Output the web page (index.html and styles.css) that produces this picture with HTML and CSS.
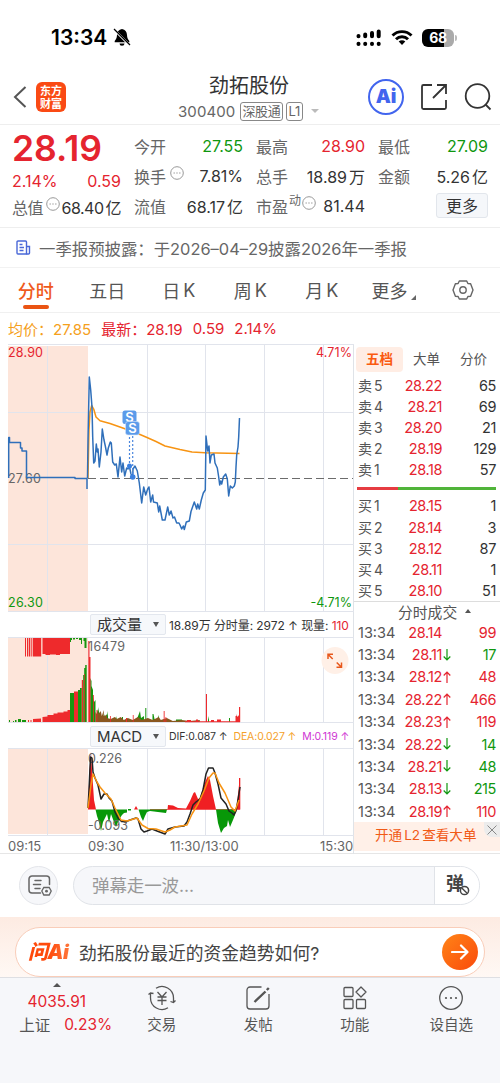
FILE: index.html
```html
<!DOCTYPE html>
<html lang="zh-CN">
<head>
<meta charset="utf-8">
<title>劲拓股份 300400</title>
<link rel="stylesheet" href="styles.css">
</head>
<body>
<div class="app">
  <div class="status">
    <span class="clock">13:34</span>
    <svg class="bell" width="18" height="19" viewBox="0 0 18 19"><path d="M9 1c-3.300 .5-4.800 3-5 6-.1 3-1 4.500-2.300 6v1.300h14.600V13C15 11.500 14.100 10 14 7c-.2-3-1.700-5.500-5-6zM6.500 15.500a2.500 2.300 0 0 0 5 0z" fill="#000"/><path d="M1 1.500l15.500 15.500" stroke="#fff" stroke-width="2.400"/><path d="M1 1l16 16" stroke="#000" stroke-width="1.300"/></svg>
    <div class="status-right">
      <svg width="26" height="18" viewBox="0 0 26 18"><g stroke="#000" stroke-width="4" stroke-linecap="round"><path d="M2.500 7v.2M9.200 5.500v1.700M16 4v3.200M22.700 2.500v4.700M2.500 14.800v.2M9.200 14.800v.2M16 14.800v.2M22.700 14.800v.2"/></g><path d="M0 11h26" stroke="#fff" stroke-width="1.800"/></svg>
      <svg width="22" height="17" viewBox="0 0 22 17"><g fill="none" stroke="#000" stroke-width="2.900"><path d="M1.500 6.500a13.500 13.500 0 0 1 19 0"/><path d="M5 10.200a8.500 8.500 0 0 1 12 0"/></g><path d="M11 16l-3.300-3.500a4.700 4.700 0 0 1 6.600 0z" fill="#000"/></svg>
      <div class="battery-wrap"><div class="battery">68</div><i class="battery-tip"></i></div>
    </div>
  </div>

  <header class="header">
    <svg class="back" width="14" height="24" viewBox="0 0 14 24"><path d="M12.500 2L2 12l10.500 10" fill="none" stroke="#555" stroke-width="2"/></svg>
    <div class="brand"><span>东方</span><span>财富</span></div>
    <div class="title">
      <div class="name">劲拓股份</div>
      <div class="code"><span>300400</span><span class="tag">深股通</span><span class="tag level">L1</span><i class="down"></i></div>
    </div>
    <div class="head-icons">
      <div class="ai-round">Ai</div>
      <svg width="28" height="28" viewBox="0 0 28 28"><g fill="none" stroke="#333" stroke-width="1.800"><path d="M12 2H3.500A1.500 1.500 0 0 0 2 3.500v21A1.500 1.500 0 0 0 3.500 26h21a1.500 1.500 0 0 0 1.500-1.500V17"/><path d="M17 2h9v9M26 2L13 15"/></g></svg>
      <svg width="28" height="28" viewBox="0 0 28 28"><g fill="none" stroke="#333" stroke-width="1.800"><circle cx="13.500" cy="13" r="11.800"/><path d="M21.500 21.500l5 5"/></g></svg>
    </div>
  </header>

  <section class="quote">
    <div class="col">
      <div class="big red">28.19</div>
      <div class="row change red"><b>2.14%</b><b>0.59</b></div>
      <div class="row cap"><span>总值<svg class="dots" viewBox="0 0 14 14"><circle cx="7" cy="7" r="6.300"/><path d="M3.500 7h1.400M6.300 7h1.400M9.100 7h1.400"/></svg></span><b>68.40<em>亿</em></b></div>
    </div>
    <div class="col">
      <div class="row"><span>今开</span><b class="green">27.55</b></div>
      <div class="row"><span>换手<svg class="dots wide" viewBox="0 0 14 14"><circle cx="7" cy="7" r="6.300"/><path d="M3.500 7h1.400M6.300 7h1.400M9.100 7h1.400"/></svg></span><b>7.81%</b></div>
      <div class="row"><span>流值</span><b>68.17<em>亿</em></b></div>
    </div>
    <div class="col">
      <div class="row"><span>最高</span><b class="red">28.90</b></div>
      <div class="row"><span>总手</span><b>18.89<em>万</em></b></div>
      <div class="row"><span>市盈<sup>动</sup><svg class="dots tight" viewBox="0 0 14 14"><circle cx="7" cy="7" r="6.300"/><path d="M3.500 7h1.400M6.300 7h1.400M9.100 7h1.400"/></svg></span><b>81.44</b></div>
    </div>
    <div class="col">
      <div class="row"><span>最低</span><b class="green">27.09</b></div>
      <div class="row"><span>金额</span><b>5.26<em>亿</em></b></div>
      <div class="row end"><span class="more-btn">更多</span></div>
    </div>
  </section>

  <div class="notice">
    <svg width="15" height="15" viewBox="0 0 15 15"><g fill="none" stroke="#4a68d8" stroke-width="1.400"><path d="M10.500 14H2a1 1 0 0 1-1-1V2a1 1 0 0 1 1-1h7.500a1 1 0 0 1 1 1z"/><path d="M10.500 6.500h3V13a1 1 0 0 1-1 1h-2M3.500 4.500h3M3.500 7.500h4.500M3.500 10.500h4"/></g></svg>
    <span>一季报预披露：于2026–04–29披露2026年一季报</span>
  </div>

  <nav class="tabs">
    <span class="tab active">分时</span><span class="tab">五日</span><span class="tab">日<i>K</i></span><span class="tab">周<i>K</i></span><span class="tab">月<i>K</i></span><span class="tab more">更多<svg width="5" height="5" viewBox="0 0 5 5"><path d="M5 0v5H0z" fill="#666"/></svg></span>
    <span class="tab"><svg class="gear" width="22" height="20" viewBox="0 0 22 20"><g fill="none" stroke="#666" stroke-width="1.400" stroke-linejoin="round"><path d="M7.300 1h7.400l1.200 2.500 2.700.3L21 10l-2.400 6.200-2.700.3-1.200 2.500H7.300l-1.200-2.500-2.700-.3L1 10l2.400-6.200 2.700-.3z"/><circle cx="11" cy="10" r="3.200"/></g></svg></span>
  </nav>

  <div class="latest"><span class="avg">均价：27.85</span><span class="new">最新：28.19</span><span>0.59</span><span>2.14%</span></div>

  <main class="main">
    <div class="charts">
      <svg class="chart" width="354" height="268" viewBox="0 344 354 268">
        <rect x="8" y="346" width="80" height="265" fill="#fde5da"/>
        <path class="grid" d="M8 344.500H354M8 412.500H354M8 544.500H354M8 611.500H354M47.500 346V611M147.500 345V611M205.500 345V611M264.500 345V611M323.500 345V611"/>
        <path d="M88 478.500H353" stroke="#6c6c6c" stroke-width="1.200" stroke-dasharray="8 4"/>
        <text x="8" y="357" class="lbl red" textLength="35">28.90</text>
        <text x="8" y="482.500" class="lbl" textLength="33">27.60</text>
        <text x="8" y="607" class="lbl green" textLength="35">26.30</text>
        <text x="316" y="357" class="lbl red" textLength="36">4.71%</text>
        <text x="310.500" y="607" class="lbl green" textLength="41.500">-4.71%</text>
        <path class="line avgline" d="M88 478L89 430L90 412L91.700 405.500L93.700 409L96 417L100 420.700L110 423.500L127 429.500L140 434.500L147 437.500L156 441.500L165 446L180 449.500L192 452L205 452.700L239.500 453.500"/>
        <path class="line" d="M8.700 478V437.500H9.500V442.500H20.500V448H22V451H26.500V477.500H75V478.500H87V489"/>
        <path class="line price" d="M87.500 478L88 440L89.300 377L90.700 390L92 407L92.700 437L93.700 463L95 461L96.300 444L97.300 452L98 449L99.300 467L101 452L102.300 429L104 440L105.300 446L107 455L108.300 448L110.300 442L111.300 443L112.700 462L114.700 465L116.300 464L118 477L120 457L121.700 472L123 463L124.700 476L126.700 468L128 469L129.300 466L131 474L132.700 477L133 469L135 466L137.300 471L139.300 483L141.700 503L143.700 487L145.700 495L147.700 489L149 487L150.700 502L152.700 495L153.500 502L157.300 503L158.700 512L159.700 506L162.300 520L165 520L167.700 507L169.300 515L171 511L173 518L174.500 517L176.700 523L179 523L180 525L181.700 529L183.300 526L184.300 529.500L186.300 522L189.300 521L191 511.500L194.300 502L196.700 509L197.700 504L199.300 509L201.300 500L203.300 493L205.300 490L206 436L207.700 451L209 446L210 463L211.300 455L214 454L215 463L217.300 468L218.700 477L219.700 485L220.700 481L221.700 484L223.300 477L225.700 474L227.300 479L228.700 496L230.300 486L232.300 488L234.300 486L235.300 482L236 467L236.700 455L238 447L238.700 437L239.500 418"/>
        <path d="M129.500 425V464M132.700 436V475" stroke="#4a86dd" stroke-width="1.200" stroke-dasharray="2 2"/>
        <circle cx="129.500" cy="466" r="2.500" fill="#3b80e0"/><circle cx="132.700" cy="477" r="2.800" fill="#3b80e0"/>
        <rect x="122.500" y="410.500" width="14" height="13.500" rx="2.500" fill="#5b9bea"/><text x="129.500" y="422" class="sell">S</text>
        <rect x="125.500" y="421.500" width="14" height="13.500" rx="2.500" fill="#5b9bea" stroke="#d5e5fb" stroke-width=".6"/><text x="132.500" y="433" class="sell">S</text>
      </svg>

      <div class="toolbar">
        <span class="select">成交量<i></i></span>
        <span class="stats vol">18.89万 分时量: 2972 ↑ 现量: <b class="red">110</b></span>
      </div>
      <svg class="chart" width="354" height="87" viewBox="0 637 354 87">
        <rect x="8" y="638" width="80" height="84.500" fill="#fde5da"/>
        <path class="grid" d="M8 637.500H354M8 722.500H354M47.500 638V722M147.500 638V722M205.500 638V722M264.500 638V722M323.500 638V722"/>
        <g fill="#ee2a2c">
          <path d="M25 638h1v18.500h-1zM27 638h1.300v18.500H27zM29 638h1.300v18.500H29zM31.300 638h1v18.500h-1zM33 638h8.200v18.500H33zM42.500 638H70v16h-10v1h-4v-.5h-6v.5h-4.500v-1h-3z"/>
          <path d="M33 722v-3l8-.5v3.500zM42.500 722v-5l5-.5v-1.500h6v-1.500h4v-1h6v-1h4v-1.500H70v12zM28 722v-2h1v2zM30.500 722v-2h1v2z"/>
          <path d="M74 722v-30.500h4V722z"/>
        </g>
        <g fill="#16960f">
          <path d="M70 722v-29h4v29zM78 722v-32h2v-2h1.800v34zM83.200 722v-47h1v-7h1v-3h1.500v57zM70 638h2v2h-1v2h-1zM73 638h2v1.500h-2zM76 638h2v1h-2zM79 638h3v6h-1v-4h-2zM83.500 638h3v10h-2v-7h-1z"/>
          <path d="M9 722v-2h1v2zM13 722v-1h1v1zM15 722v-2h1.500v2zM18 722v-3h3v3zM22 722v-2h4v2z"/>
          <path d="M90.200 722v-44l1.300 3v5l1.500 4v7l1 5 1.500-2v22zM97 722v-13l1 4v-6l1 5 2 3v7zM104 722v-8l1 3 2-3v-3l1 5v6zM115 722v-5l1 2v-3l1 4 3-2v4zM136.500 722v-2l2-5 1.500-4 1 7 3-2v6zM145.300 722v-14h1v14zM152.500 722v-8h1l1 5h3l1-4 1 7zM122 722v-5h1v5zM208 722v-6l1 4v2zM229 722v-4h1v4zM176 722v-2.500h6v2.500z"/>
        </g>
        <path d="M95.300 722v-10l1.500 2 1-4 1 4 2-3 1 5 2-6v6l3-1v3l4 1 4-2 2 2 4-2 3 3 4-2 5 2 5-3 4 3 6-2 5 2 6-3 2 3 6-2 6 3 9-1 8 1 10-1V722z" fill="#8a571e"/>
        <g fill="#ee2a2c">
          <path d="M81.800 722v-42h1.400v42zM84.300 722v-48h.7v48zM88.300 722V641h1.200v16h1v65zM93 722v-27h.8v27zM96.500 722v-12h.8v12zM110 722v-6h.8v6zM126 722v-4h1v4zM132.800 722v-7h.8v7zM163.700 722v-11h.9v11zM165.500 722v-5h.8v5zM187 722v-2h4v2zM196 722v-2.500h2v2.500zM205.900 722v-28h1.100v28zM211 722v-2h3v2zM217 722v-2.500h4v2.500zM239 722v-15h1.200v15zM235.500 722v-6h1v-2l1 3 1.500-2v7z"/>
          <path d="M185 721.300h55v.9h-55z"/>
        </g>
        <text x="88" y="651" class="lbl" textLength="37">16479</text>
        <circle cx="335" cy="660.500" r="13.500" fill="#fff0e7"/>
        <path d="M328 659v-4.800h5M328.200 654.500l4.500 4.500M341.500 662.500v4.800h-5M341.200 667l-4.500-4.500" fill="none" stroke="#e8581c" stroke-width="1.500"/>
      </svg>

      <div class="toolbar">
        <span class="select macd">MACD<i></i></span>
        <span class="stats mac"><span>DIF:0.087 ↑</span><span class="dea">DEA:0.027 ↑</span><span class="m">M:0.119 ↑</span></span>
      </div>
      <svg class="chart" width="354" height="88" viewBox="0 748 354 88">
        <rect x="8" y="749" width="80" height="85" fill="#fde5da"/>
        <path class="grid" d="M8 748.500H354M8 835.500H354M47.500 749V835M147.500 749V835M205.500 749V835M264.500 749V835M323.500 749V835"/>
        <path fill="#f01f23" d="M88 809.500L89.500 770L91 752L92 770L94 800L96 809.500zM134 809.500L136 806L138 809.500zM167.500 809.500L168 805L173 805.500L178 808L186 808.500L190 801L193.500 793L195 792L198 799L200 798L203 788L206 780L208 776L210 780L213 796L216 809.500zM236 809.500L237 803L239 785V778H240.300V809.500zM150 809h90v.7h-90z"/>
        <path fill="#079808" d="M95.500 809.500H127V812.500L124 813L122 815L120 818L118 822L116 827L114 822L111 814L109 823L107 814L105 818L103 822L101 831L99 822L97 816zM128 809h3v1.500h-3zM138.500 809.500H167L166 813L154 811.500L150 811L147 812L145 816L143 821L141 817zM216 809.500H236L235 815L233 820L230 827L228 820L227 826L224 828L221 833L218 823z"/>
        <text x="88" y="762.500" class="lbl" textLength="34">0.226</text>
        <text x="88" y="829.500" class="lbl" textLength="40">-0.093</text>
        <path class="line dif" d="M88 808L89 790L90.500 757L92 758L93 772L95 778L98 785L101 799L104 794L107 794L109 798L112 801L115 812L118 818L121 821L125 822L130 820L136 818L138 819L141 829L144 832L147 831L152 829L157 831L165 834L168 829L175 827L184 826L187 822L190 814L193 805L196 802L200 799L203 790L206 774L208.500 768L213 768L215 773L218 784L221 798L226 804L229 811L232 813L234 815L236 811L238 800L240 787"/>
        <path class="line avgline" d="M88 808L91 785L93 774L97 782L100 787L105 793L111 799L115 808L121 820L127 821L137 818L142 825L148 828.500L156 829L165 832L170 830L175 827L187 825L192 814L198 804L204 791L209 778L213 773L215 773L219 783L225 793L231 807L235 811L239 800"/>
      </svg>
      <div class="axis"><span>09:15</span><span class="t2">09:30</span><span class="t3">11:30/13:00</span><span class="t4">15:30</span></div>
    </div>

    <aside class="book">
      <div class="book-tabs"><span class="on">五档</span><span>大单</span><span>分价</span></div>
      <div class="levels">
        <div><span>卖<i>5</i></span><b>28.22</b><em>65</em></div>
        <div><span>卖<i>4</i></span><b>28.21</b><em>69</em></div>
        <div><span>卖<i>3</i></span><b>28.20</b><em>21</em></div>
        <div><span>卖<i>2</i></span><b>28.19</b><em>129</em></div>
        <div><span>卖<i>1</i></span><b>28.18</b><em>57</em></div>
      </div>
      <div class="ratio"><i></i></div>
      <div class="levels buy">
        <div><span>买<i>1</i></span><b>28.15</b><em>1</em></div>
        <div><span>买<i>2</i></span><b>28.14</b><em>3</em></div>
        <div><span>买<i>3</i></span><b>28.12</b><em>87</em></div>
        <div><span>买<i>4</i></span><b>28.11</b><em>1</em></div>
        <div><span>买<i>5</i></span><b>28.10</b><em>51</em></div>
      </div>
      <div class="deal-head">分时成交<i></i></div>
      <div class="deals">
        <div><span>13:34</span><b>28.14</b><u></u><em class="red">99</em></div>
        <div><span>13:34</span><b>28.11</b><u class="green"><svg viewBox="0 0 8 12"><path d="M4 0v11M.7 7.500L4 11l3.300-3.500"/></svg></u><em class="green">17</em></div>
        <div><span>13:34</span><b>28.12</b><u class="red"><svg viewBox="0 0 8 12"><path d="M4 12V1M.7 4.500L4 1l3.300 3.500"/></svg></u><em class="red">48</em></div>
        <div><span>13:34</span><b>28.22</b><u class="red"><svg viewBox="0 0 8 12"><path d="M4 12V1M.7 4.500L4 1l3.300 3.500"/></svg></u><em class="red">466</em></div>
        <div><span>13:34</span><b>28.23</b><u class="red"><svg viewBox="0 0 8 12"><path d="M4 12V1M.7 4.500L4 1l3.300 3.500"/></svg></u><em class="red">119</em></div>
        <div><span>13:34</span><b>28.22</b><u class="green"><svg viewBox="0 0 8 12"><path d="M4 0v11M.7 7.500L4 11l3.300-3.500"/></svg></u><em class="green">14</em></div>
        <div><span>13:34</span><b>28.21</b><u class="green"><svg viewBox="0 0 8 12"><path d="M4 0v11M.7 7.500L4 11l3.300-3.500"/></svg></u><em class="green">48</em></div>
        <div><span>13:34</span><b>28.13</b><u class="green"><svg viewBox="0 0 8 12"><path d="M4 0v11M.7 7.500L4 11l3.300-3.500"/></svg></u><em class="green">215</em></div>
        <div><span>13:34</span><b>28.19</b><u class="red"><svg viewBox="0 0 8 12"><path d="M4 12V1M.7 4.500L4 1l3.300 3.500"/></svg></u><em class="red">110</em></div>
      </div>
      <div class="l2">开通<i>L2</i>查看大单<span class="close"><svg width="10" height="10" viewBox="0 0 10 10"><path d="M.5.500l9 9M9.500.500l-9 9" stroke="#888" fill="none"/></svg></span></div>
    </aside>
  </main>

  <section class="danmu">
    <span class="round"><svg width="24" height="22" viewBox="0 0 24 22"><g fill="none" stroke="#666" stroke-width="1.500" stroke-linecap="round"><path d="M12.500 18H4a3 3 0 0 1-3-3V4a3 3 0 0 1 3-3h14.500a3 3 0 0 1 3 3v5.500M7 5.500h6M5.500 9.500h7M7 13.500h5"/><path d="M15.800 12.500h5.400l2 3.500-2 4h-5.400l-2-4z" stroke-width="1.300"/></g><circle cx="18.500" cy="16.200" r="1.400" fill="#666"/></svg></span>
    <div class="input"><span class="ph">弹幕走一波...</span><span class="toggle">弹<svg class="ban" width="11" height="11" viewBox="0 0 11 11"><circle cx="5.500" cy="5.500" r="4.100" fill="#fff" stroke="#444" stroke-width="1.500"/><path d="M2.800 3l5.300 5.200" stroke="#444" stroke-width="1.400"/></svg></span></div>
  </section>

  <section class="ask">
    <div class="ask-box"><span class="ask-logo">问Ai</span><span class="ask-text">劲拓股份最近的资金趋势如何?</span><span class="go"><svg width="18" height="16" viewBox="0 0 18 16"><path d="M1 8h15M10 1.500L16.500 8 10 14.500" fill="none" stroke="#fff" stroke-width="2.200" stroke-linecap="round" stroke-linejoin="round"/></svg></span></div>
  </section>

  <footer class="bottom">
    <div class="index"><i></i><b>4035.91</b><span>上证<b>0.23%</b></span></div>
    <div class="item"><svg width="28" height="26" viewBox="0 0 28 26"><g fill="none" stroke="#555" stroke-width="1.300"><path d="M8 3.200A11.500 11.500 0 0 1 25.500 13v4.500M27.500 15.500l-2 2-3-1M20 22.800A11.500 11.500 0 0 1 2.500 13V8M.5 9.500l2-1.500 3 .5M9.500 7l4.500 5 4.500-5M14 12v8M9.500 12h9M9.500 15.500h9"/></g></svg><span>交易</span></div>
    <div class="item"><svg width="26" height="26" viewBox="0 0 26 26"><path d="M16.500 2H5a3 3 0 0 0-3 3v16a3 3 0 0 0 3 3h16a3 3 0 0 0 3-3V9" fill="none" stroke="#555" stroke-width="1.300"/><path d="M9.500 17L20.500 6.500M21.800 5l2-2" stroke="#555" stroke-width="2.400"/></svg><span>发帖</span></div>
    <div class="item"><svg width="26" height="26" viewBox="0 0 26 26"><g fill="none" stroke="#555" stroke-width="1.300"><rect x="2" y="2.500" width="9" height="9" rx="1"/><rect x="2" y="14.500" width="9" height="9" rx="1"/><rect x="14.500" y="14.500" width="9" height="9" rx="1"/><path d="M19 2l5 5-5 5-5-5z" stroke-linejoin="round"/></g></svg><span>功能</span></div>
    <div class="item"><svg width="26" height="26" viewBox="0 0 26 26"><circle cx="13" cy="13" r="11.300" fill="none" stroke="#555" stroke-width="1.300"/><g fill="#555"><circle cx="8" cy="13" r="1.100"/><circle cx="13" cy="13" r="1.100"/><circle cx="18" cy="13" r="1.100"/></g></svg><span>设自选</span></div>
  </footer>
</div>
</body>
</html>
```

FILE: styles.css
```css
* { box-sizing: border-box; }
body { margin: 0; background: #fff; color: #333; font-family: Inter, "Noto Sans CJK SC", sans-serif; white-space: nowrap; }
i, em, u { font-style: normal; text-decoration: none; }
b { font-weight: 400; }
svg { display: block; flex: none; }
.app { width: 500px; height: 1083px; overflow: hidden; display: flex; flex-direction: column; }
.app > * { flex: none; }
.red { color: #e5242f; fill: #e5242f; }
.green { color: #0f970f; fill: #0f970f; }

.status { height: 75px; display: flex; align-items: center; padding: 0 43px 0 51px; }
.clock { font-size: 21px; font-weight: 600; color: #000; width: 62px; letter-spacing: 0; }
.status-right { margin-left: auto; display: flex; align-items: center; gap: 9px; }
.battery-wrap { display: flex; align-items: center; gap: 1px; }
.battery { width: 32px; height: 18px; border-radius: 6px; background: linear-gradient(90deg, #000 68%, #aaa 68%); color: #fff; font-size: 14px; font-weight: 700; line-height: 18px; text-align: center; letter-spacing: -.4px; }
.battery-tip { width: 2px; height: 6px; border-radius: 0 2px 2px 0; background: #bbb; }

.header { height: 50px; border-bottom: 1px solid #eee; display: grid; grid-template-columns: 23px 30px 1fr 124px; align-items: center; padding: 0 8px 0 13px; }
.back { margin-top: -6px; }
.brand { width: 30px; height: 30px; margin-top: -6px; border-radius: 6px; background: #fa4a14; color: #fff; font: 700 11px/12px "Noto Sans CJK SC", sans-serif; display: flex; flex-direction: column; align-items: center; justify-content: center; gap: 1px; }
.title { display: flex; flex-direction: column; height: 49px; }
.name { margin-left: 143px; font-size: 20px; line-height: 23px; }
.code { margin-left: 112px; display: flex; align-items: center; height: 28px; font-size: 15px; color: #666; letter-spacing: .1px; }
.tag { border: 1px solid #888; border-radius: 3px; font-size: 13px; line-height: 17px; padding: 0 1px; margin-left: 5px; letter-spacing: -.3px; }
.tag.level { margin-left: 3px; padding: 0 2px; }
.down { border: 4px solid transparent; border-top-color: #bbb; border-bottom: 0; margin-left: 8px; }
.head-icons { display: flex; align-items: center; gap: 16px; margin-top: -6px; }
.ai-round { width: 36px; height: 36px; flex: none; border: 2px solid #4265ee; border-radius: 50%; color: #4265ee; font-size: 19px; font-weight: 900; line-height: 31px; text-align: center; }

.quote { height: 103px; border-bottom: 1px solid #eee; display: grid; grid-template-columns: 109px 109px 109px 110px; column-gap: 13px; padding: 6px 12px 0; }
.row { height: 30px; display: flex; align-items: center; justify-content: space-between; font-size: 16px; }
.row span { display: flex; align-items: center; color: #666; }
.row em { margin-left: 2px; }
.big { font-size: 35.500px; font-weight: 600; line-height: 35px; height: 39px; letter-spacing: 0; }
.change { height: 22px; }
.cap { height: 29px; letter-spacing: -.5px; }
.dots { width: 14px; height: 14px; margin: -6px 0 0 4px; fill: none; stroke: #999; stroke-width: 1; }
.cap .dots { margin-left: 3px; margin-right: -2px; }
.dots.wide { margin-left: 4px; }
.dots.tight { margin-left: 1px; }
.row sup { font-size: 12px; line-height: 12px; margin: -10px 0 0 1px; }
.row.end { justify-content: flex-end; }
.row .more-btn { width: 52px; height: 25px; justify-content: center; border: 1px solid #e2e6ec; border-radius: 3px; background: #f5f7fa; color: #333; margin-top: -2px; }

.notice { height: 40px; border-bottom: 1px solid #f2f2f2; display: flex; align-items: center; gap: 8px; padding-left: 16px; font-size: 16.4px; color: #666; }

.tabs { height: 45px; border-bottom: 1px solid #f0f0f0; display: grid; grid-template-columns: 71.500px 71.500px 71.500px 71.500px 71.500px 72px 67px; }
.tab { display: flex; align-items: center; justify-content: center; font-size: 18px; color: #555; gap: 3px; }
.tab.active { color: #ef5a1c; position: relative; font-weight: 500; }
.tab.active::after { content: ""; position: absolute; bottom: 3px; width: 26px; height: 4px; border-radius: 2px; background: #ea5413; }
.tab.more svg { margin-top: 14px; }

.latest { height: 31px; display: flex; align-items: center; padding-left: 8px; gap: 10px; font-size: 15px; color: #e5242f; }
.avg { color: #f5a01c; }

.main { height: 510px; display: grid; grid-template-columns: 354px 146px; border-bottom: 1px solid #e6e6e6; }
.charts { border-right: 1px solid #dfe3e8; }
.charts .chart { width: 354px; }
.grid { stroke: #e1e4ec; stroke-width: 1; fill: none; }
.line { fill: none; stroke: #2f6fba; stroke-width: 1.5; stroke-linejoin: round; }
.avgline { stroke: #f79413; }
.dif { stroke: #222; }
.lbl { font-size: 12.5px; fill: #666; }
.lbl.red { fill: #e5242f; }
.lbl.green { fill: #0f970f; }
.sell { font-size: 13px; font-weight: 600; fill: #fff; text-anchor: middle; }
.toolbar { height: 25px; display: flex; align-items: center; padding-left: 90px; }
.chart + .toolbar + .chart + .toolbar { height: 24px; }
.select { width: 76px; height: 21px; flex: none; background: #f6f8fb; border: 1px solid #e3e7ee; border-radius: 2px; font-size: 15px; line-height: 19px; padding: 0 6px; display: flex; align-items: center; justify-content: space-between; }
.select i { border: 3.5px solid transparent; border-top: 5px solid #555; border-bottom: 0; }
.stats { margin-left: 3px; font-size: 12px; letter-spacing: -.08px; }
.mac { display: flex; gap: 6px; font-size: 10.5px; letter-spacing: -.1px; }
.dea { color: #f5a12a; }
.m { color: #cf35d3; }
.axis { height: 18px; display: grid; grid-template-columns: 80px 82px 150px 1fr; padding-left: 8px; font-size: 13px; line-height: 20px; color: #666; }
.t4 { text-align: right; }

.book { color: #555; }
.book-tabs { height: 31px; display: grid; grid-template-columns: 47px 47px 47px; padding: 3px 0 3px 2px; font-size: 13.5px; line-height: 25px; text-align: center; }
.book-tabs .on { background: #ffede4; color: #fa5a0f; border-radius: 4px; font-weight: 700; }
.levels { font-size: 14.5px; }
.levels div, .deals div { display: grid; grid-template-columns: 40px 44px 54px; height: 21.1px; line-height: 21.1px; padding-left: 4px; align-items: center; }
.levels i { margin-left: 2px; }
.levels span { font-size: 14px; }
.levels b, .deals b { color: #e5242f; text-align: right; letter-spacing: -.4px; }
.levels em, .deals em { text-align: right; letter-spacing: -.4px; }
.levels em { color: #333; }
.ratio { height: 3px; margin: 7px 4px 5px 3px; background: #50b43a; }
.ratio i { display: block; height: 3px; width: 41px; background: #e63c41; }
.deal-head { height: 20px; border-top: 1px solid #ddd; padding-left: 44px; display: flex; align-items: center; gap: 8px; font-size: 14.8px; }
.deal-head i { border: 3.5px solid transparent; border-bottom: 4px solid #555; border-top: 0; }
.deals { font-size: 14.5px; }
.deals div { grid-template-columns: 40px 44px 10px 44px; height: 22.4px; }
.deals u svg { width: 8px; height: 12px; margin-left: 1px; fill: none; stroke: currentColor; stroke-width: 1.2; }
.l2 { height: 29px; background: #fff0e8; color: #f15a16; font-size: 13.6px; line-height: 27px; position: relative; padding-left: 21px; }
.l2 i { margin: 0 2px; }
.close { position: absolute; top: 0; right: 0; width: 16px; height: 15px; background: #ececec; border-radius: 0 0 0 8px; display: flex; align-items: center; justify-content: center; }

.danmu { height: 63px; display: flex; align-items: center; gap: 15px; padding: 0 20px 0 19px; }
.round { width: 39px; height: 39px; border: 1px solid #e3e5ea; border-radius: 50%; background: #f6f7fa; display: flex; align-items: center; justify-content: center; padding-left: 2px; }
.input { flex: 1; height: 39px; border: 1px solid #e0e3e8; border-radius: 20px; background: #f6f7fa; display: flex; overflow: hidden; align-items: center; }
.ph { flex: 1; padding: 0 0 3px 18px; font-size: 17.5px; letter-spacing: -.1px; color: #999; }
.toggle { position: relative; width: 45px; height: 39px; border-left: 1px solid #e0e3e8; background: #fff; color: #444; font-size: 18px; font-weight: 700; line-height: 36px; padding-left: 11px; }
.ban { position: absolute; left: 24px; top: 19px; }

.ask { height: 60px; padding: 10px 15px 0; background: linear-gradient(#fdebe2, #fff8f4); }
.ask-box { height: 50px; border: 1.5px solid #f9cdb9; border-radius: 25px; background: #fff; display: flex; align-items: center; padding: 0 6px 0 12px; }
.ask-logo { width: 51px; font-size: 20px; line-height: 28px; font-weight: 900; font-style: italic; letter-spacing: -.5px; color: transparent; background: linear-gradient(90deg, #ff4a0c 40%, #ff8a50); -webkit-background-clip: text; background-clip: text; }
.ask-text { font-size: 17.8px; color: #444; flex: 1; }
.go { width: 36px; height: 36px; border-radius: 50%; background: linear-gradient(135deg, #ff8417, #fa4a0c); display: flex; align-items: center; justify-content: center; }

.bottom { height: 106px; background: #f6f7fa; border-top: 1px solid #dedfe3; display: grid; grid-template-columns: 113.500px 96.500px 96.500px 96.500px 96.500px; color: #555; }
.index { display: flex; flex-direction: column; align-items: center; font-size: 15.500px; }
.index i { margin-top: 5px; border: 4px solid transparent; border-bottom: 4px solid #555; border-top: 0; }
.index b { color: #e5242f; line-height: 23px; margin-top: 3px; }
.index span { display: flex; gap: 14px; padding-left: 18px; }
.index span b { margin-top: 0; }
.item { display: flex; flex-direction: column; align-items: center; padding-top: 7px; font-size: 14.500px; }
.item span { line-height: 20px; margin-top: 4px; }
```
